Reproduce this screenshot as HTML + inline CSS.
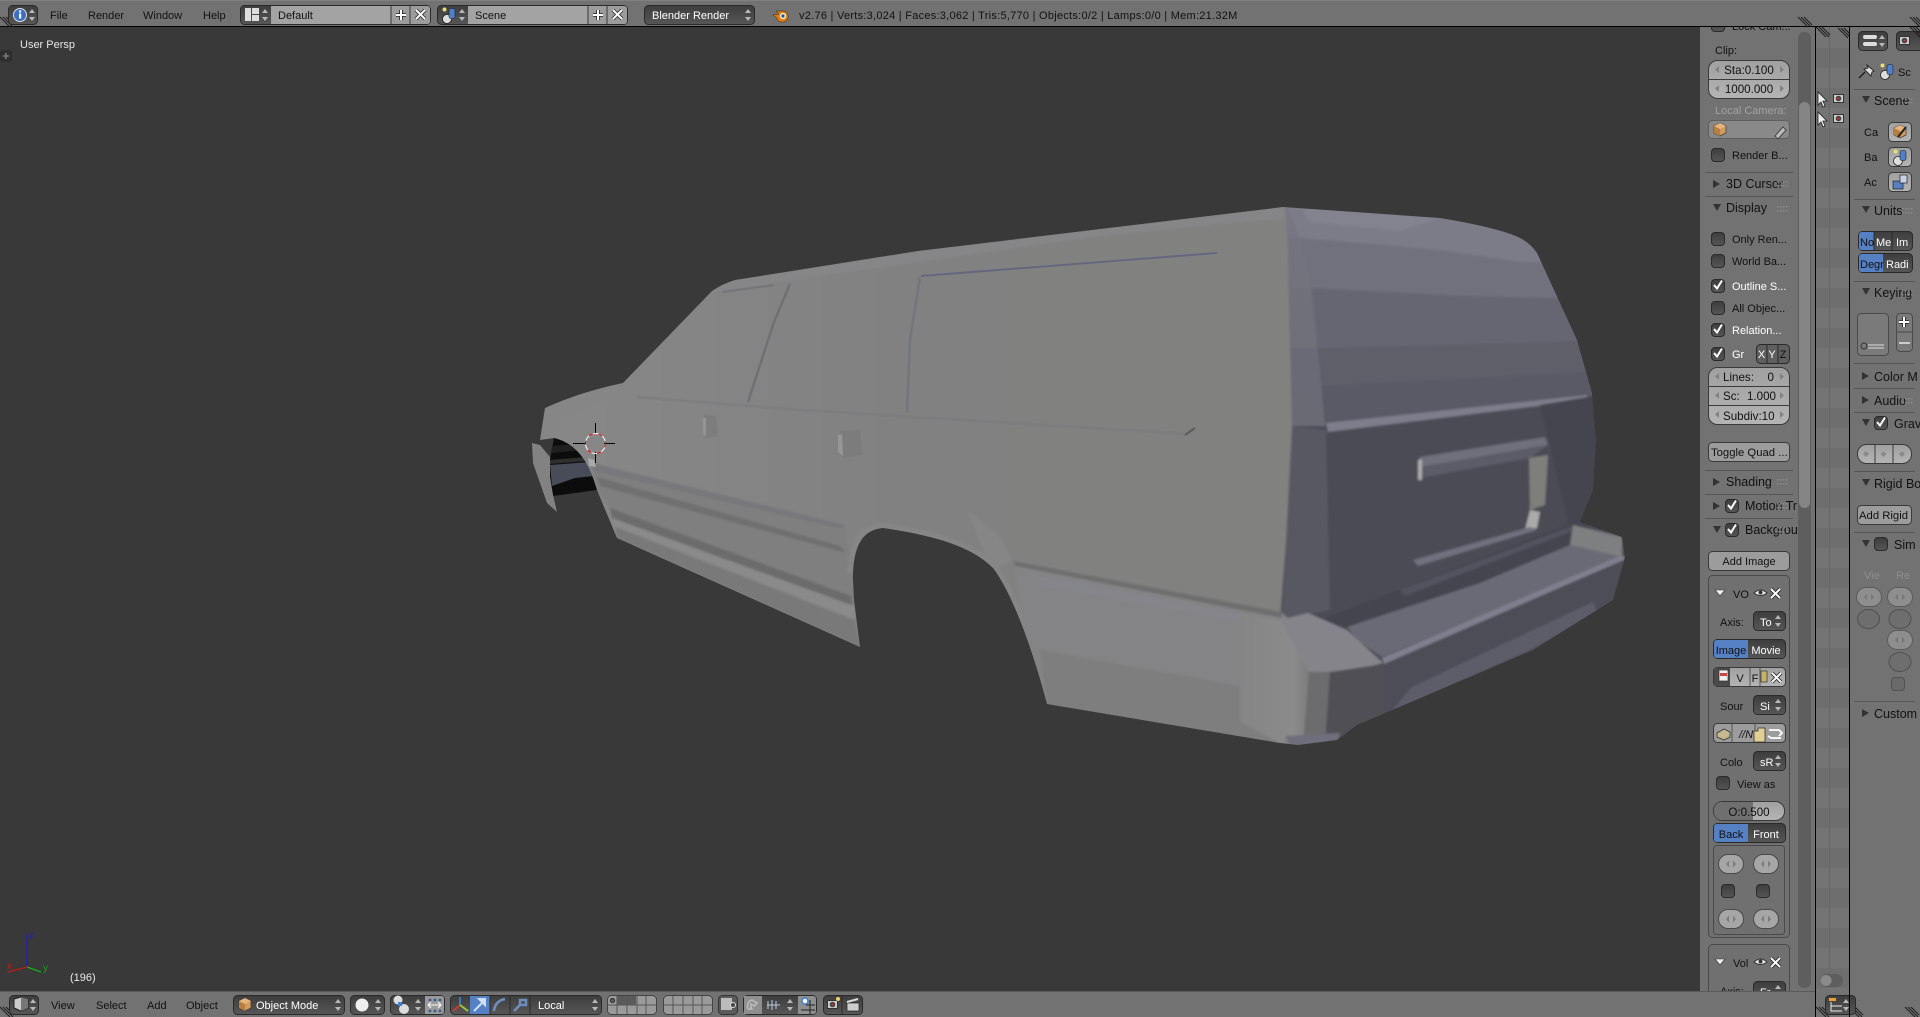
<!DOCTYPE html>
<html><head><meta charset="utf-8"><title>Blender</title>
<style>
html,body{margin:0;padding:0;background:#393939;overflow:hidden}
svg{display:block;position:absolute;left:0;top:0}
text{font-family:"Liberation Sans","DejaVu Sans",sans-serif;font-size:11px;fill:#111}
.w{fill:#fff}.v{fill:#e8e8e8}.g{fill:#a2a2a2}.h{font-size:12.5px}.f{font-size:11.6px}.c{text-anchor:middle}
.d{fill:url(#dk);stroke:#2a2a2a}.l{fill:url(#lt);stroke:#3a3a3a}.b{fill:#5680c4;stroke:#2a2a2a}
.s{stroke:#565656;stroke-width:1}.k{stroke:#000;stroke-width:1}
</style></head><body>
<svg width="1920" height="1017" viewBox="0 0 1920 1017" xmlns="http://www.w3.org/2000/svg">
<defs>
<linearGradient id="dk" x1="0" y1="0" x2="0" y2="1"><stop offset="0" stop-color="#3d3d3d"/><stop offset="1" stop-color="#565656"/></linearGradient>
<linearGradient id="lt" x1="0" y1="0" x2="0" y2="1"><stop offset="0" stop-color="#a0a0a0"/><stop offset="1" stop-color="#b4b4b4"/></linearGradient>
<linearGradient id="body" x1="540" y1="0" x2="1290" y2="0" gradientUnits="userSpaceOnUse"><stop offset="0" stop-color="#888888"/><stop offset=".5" stop-color="#818181"/><stop offset="1" stop-color="#818180"/></linearGradient>
<linearGradient id="qc" x1="1240" y1="0" x2="1312" y2="0" gradientUnits="userSpaceOnUse"><stop offset="0" stop-color="#858585"/><stop offset=".75" stop-color="#8b8b8b"/><stop offset="1" stop-color="#7a7a7a"/></linearGradient>
<filter id="soft" x="-5%" y="-5%" width="110%" height="110%"><feGaussianBlur stdDeviation="1"/></filter>
<clipPath id="car">
<path d="M540,440 L545,408 Q580,392 623,383 L712,291 Q722,284 735,280 L918,251 L1283,207 L1440,218 Q1500,228 1520,238 Q1530,243 1537,253 L1577,340 L1592,393 L1596,440 L1593,490 L1580,522 L1622,537 L1625,557 L1613,600 L1533,650 L1357,725 L1337,740 L1298,745 L1280,743 L1047,704 C1030,640 1010,590 993,568 C970,545 930,535 883,528 C860,530 853,550 853,580 L854,600 L860,647 L617,538 L597,490 Q585,445 554,438Z"/>
</clipPath>
<g id="ud"><polygon points="0,-2 3,-6 6,-2" fill="#b8b8b8"/><polygon points="0,2 3,6 6,2" fill="#b8b8b8"/></g>
<g id="dots" fill="#8c8c8c"><rect x="0" y="-3" width="1.5" height="1.5"/><rect x="3" y="-3" width="1.5" height="1.5"/><rect x="6" y="-3" width="1.5" height="1.5"/><rect x="9" y="-3" width="1.5" height="1.5"/><rect x="0" y="1" width="1.5" height="1.5"/><rect x="3" y="1" width="1.5" height="1.5"/><rect x="6" y="1" width="1.5" height="1.5"/><rect x="9" y="1" width="1.5" height="1.5"/></g>
<g id="cb"><rect x=".5" y=".5" width="13" height="13" rx="3.5" class="d"/></g>
<g id="cc"><rect x=".5" y=".5" width="13" height="13" rx="3.5" class="d"/><path d="M3,6 L6,9.5 L11,1.5" fill="none" stroke="#fff" stroke-width="2"/></g>
<polygon id="tr" points="0,-4 7,0 0,4" fill="#333"/>
<polygon id="td" points="-4,-4 4,-4 0,3" fill="#333"/>
<polygon id="tw" points="-5,-3 5,-3 0,3" fill="#eee" stroke="#333" stroke-width=".6"/>
<g id="eye"><path d="M0,0 Q6.5,-6 13,0 Q6.5,5 0,0Z" fill="#eee" stroke="#333"/><circle cx="6.5" cy="-.5" r="2" fill="#333"/></g>
<g id="x"><path d="M0,0 L9,9 M9,0 L0,9" stroke="#222" stroke-width="3.6"/><path d="M0,0 L9,9 M9,0 L0,9" stroke="#fff" stroke-width="2"/></g>
<g id="oval"><rect x=".5" y=".5" width="25" height="19" rx="9.5" fill="#a6a6a6" stroke="#4a4a4a"/><polygon points="8,10 11,6.5 11,13.5" fill="#7c7c7c"/><polygon points="18,10 15,6.5 15,13.5" fill="#7c7c7c"/></g>
<g id="cam"><rect x="0" y="2" width="11" height="9" fill="#333"/><rect x="1" y="3" width="9" height="7" fill="#ccc"/><circle cx="5.5" cy="6.5" r="2.8" fill="#444"/><circle cx="5.5" cy="6.5" r="1.1" fill="#c33"/></g>
<g id="plus"><path d="M-5,0H5M0,-5V5" stroke="#222" stroke-width="3.6"/><path d="M-5,0H5M0,-5V5" stroke="#fff" stroke-width="2"/></g>
<g id="cw" stroke="#1d1d1d" stroke-width="1"><path d="M0,0L10,10M3,0L13,10M6,0L14,8" fill="none"/></g>
<g id="cube"><polygon points="0,3 6,0 12,3 12,10 6,13 0,10" fill="#d49a5a" stroke="#3a3a3a" stroke-width=".7"/><polygon points="0,3 6,6 6,13 0,10" fill="#b77e42"/><polygon points="0,3 6,0 12,3 6,6" fill="#e8b47c"/></g>
<g id="scn"><circle cx="4" cy="12" r="4.5" fill="#ddd" stroke="#222" stroke-width=".8"/><rect x="6" y="1.5" width="6" height="10" rx="2" fill="#4f7fc9" stroke="#222" stroke-width=".6"/><circle cx="1.5" cy="2.5" r="2" fill="#e8e070"/></g>
</defs>

<rect width="1920" height="1017" fill="#393939"/>

<!-- wheel well (sits outside the body silhouette) -->
<polygon fill="#0c0c0c" points="554,438 570,441 583,457 590,470 597,490 553,496 550,477 550,460"/>
<polygon fill="#484c58" points="550,465 590,462 593,476 575,478 552,486"/>
<polygon fill="#2e2e2e" points="550,460 586,457 588,461 550,464"/>
<polygon fill="#202020" points="552,446 578,444 582,450 551,453"/>

<!-- car -->
<g clip-path="url(#car)">
<g filter="url(#soft)">
<rect x="520" y="190" width="790" height="560" fill="url(#body)"/>
<polygon fill="#868686" points="545,408 575,396 623,383 640,370 652,395 600,402 565,420 552,440 540,440"/>
<polygon fill="#868689" points="716,288 735,280 918,251 1283,207 1286,218 1100,236 920,262 790,280 722,291"/>
<!-- rocker strips -->
<polygon fill="#7f7f7f" points="592,463 845,527 853,573 854,600 610,510 597,490"/>
<polygon fill="#77777c" points="592,463 845,525 842,529 592,470"/>
<polygon fill="#707070" points="597,477 840,546 846,553 600,486"/>
<polygon fill="#6c6c6c" points="610,508 851,596 853,606 612,518"/>
<polygon fill="#8a8a8a" points="612,518 854,606 855,620 616,527"/>
<polygon fill="#797979" points="616,527 855,620 860,647 617,538"/>
<!-- arch brightening -->
<path d="M853,573 C853,545 860,530 883,528 C930,535 970,545 993,568 C1010,590 1030,640 1047,704" fill="none" stroke="#868686" stroke-width="10"/>
<polygon fill="#868686" points="967,510 997,533 1013,560 997,568 983,550"/>
<!-- rear -->
<polygon fill="#4b4b55" points="1287,205 1640,205 1640,760 1340,760 1322,647 1280,620 1290,490 1293,423"/>
<polygon fill="#5a5a66" points="1287,200 1630,200 1630,392 1325,426 1292,426"/>
<polygon fill="#5e5e6a" points="1287,200 1630,200 1630,370 1322,386 1292,386"/>
<polygon fill="#666672" points="1287,200 1630,200 1630,340 1480,344 1318,348 1291,348"/>
<polygon fill="#71717e" points="1285,200 1630,200 1630,300 1467,296 1310,288 1290,288"/>
<polygon fill="#7c7c89" points="1285,200 1630,200 1630,265 1520,262 1440,250 1300,238 1288,238"/>
<polygon fill="#83838f" points="1300,207 1440,218 1400,231 1310,222"/>
<polygon fill="#74747f" opacity=".6" points="1287,207 1300,238 1312,288 1325,426 1292,426"/>
<polygon fill="#7d7d8b" points="1326,423 1587,395 1587,400 1328,432"/>
<polygon fill="#44444f" points="1540,405 1600,395 1600,525 1570,530"/>
<polygon fill="#585862" points="1292,426 1326,430 1330,610 1282,620"/>
<polygon fill="#6f6f7d" points="1420,457 1545,437 1548,445 1420,467"/>
<polygon fill="#5b5b67" points="1420,467 1548,445 1530,458 1420,478"/>
<polygon fill="#7e7f7a" points="1529,458 1548,455 1545,505 1530,510"/>
<polygon fill="#aaa" points="1418,460 1422,459 1422,480 1418,480"/>
<polygon fill="#aaa" points="1530,510 1540,512 1537,528 1525,530"/>
<polygon fill="#70707e" points="1413,560 1530,527 1537,530 1418,566"/>
<polygon fill="#44444f" points="1320,620 1580,520 1575,548 1347,632"/>
<polygon fill="#53535f" points="1400,590 1575,525 1575,530 1405,596"/>
<polygon fill="#6a6a76" points="1347,627 1480,583 1570,545 1622,557 1382,657 1357,640"/>
<polygon fill="#7f7f8e" points="1382,658 1622,555 1626,559 1384,664"/>
<polygon fill="#4d4d59" points="1384,664 1630,559 1613,600 1533,650 1387,715 1357,728"/>
<polygon fill="#5d5d6a" points="1412,687 1593,602 1597,612 1530,650 1390,713"/>
<polygon fill="#7e7f80" points="1573,525 1622,537 1622,557 1570,545"/>
<!-- lower quarter (over rear base) -->
<polygon fill="#848486" points="1013,562 1282,613 1322,647 1308,732 1280,743 1047,704 1027,640"/>
<polygon fill="#6e6e6e" points="1013,561 1282,612 1282,618 1015,566"/>
<polygon fill="#85858c" points="1040,576 1240,614 1240,622 1040,586"/>
<polygon fill="#7e7e7e" points="1040,650 1308,698 1307,732 1280,743 1047,704"/>
<polygon fill="url(#qc)" points="1240,613 1280,620 1322,647 1310,673 1308,732 1280,743 1240,722"/>
<polygon fill="#84848a" points="1280,620 1308,613 1347,630 1383,663 1357,670 1310,673"/>
<polygon fill="#6c6c6e" points="1309,672 1332,672 1325,745 1303,745"/>
<polygon fill="#4f4f54" points="1330,672 1384,664 1385,722 1337,745 1325,745"/>
<polygon fill="#6e6e7c" points="1285,736 1340,733 1337,745 1290,746"/>
</g>
<!-- window lines -->
<path d="M907,413 L910,340 L920,277" fill="none" stroke="#74757f" stroke-width="2.6"/>
<path d="M921,276 L1217,253" fill="none" stroke="#64677f" stroke-width="2"/>
<path d="M748,402 L774,322 L790,284" fill="none" stroke="#6f6f76" stroke-width="2.4"/>
<path d="M722,292 L774,285" fill="none" stroke="#74747a" stroke-width="2"/>
<path d="M637,397 L800,410 L1190,434" fill="none" stroke="#7c7c81" stroke-width="3" opacity=".6"/>
<path d="M1185,435 L1195,428" fill="none" stroke="#5c5c5c" stroke-width="2"/>
<!-- handles -->
<polygon fill="#7d7d7d" points="704,414 716,416 718,436 705,438"/><polygon fill="#949494" points="703,418 706,418 706,436 703,434"/>
<polygon fill="#7c7c7c" points="840,431 860,430 862,455 842,458"/><polygon fill="#969696" points="838,435 842,434 843,456 838,452"/>
</g>
<polygon fill="#aaa" points="588,458 594,460 596,467 589,466"/>
<polygon fill="#828282" points="532,443 540,445 550,457 550,477 553,495 557,512 547,503 540,483 533,463"/>
<!-- 3D cursor -->
<path d="M573,443.5H586M604,443.5H615M595.5,423V434M595.5,452V463" stroke="#000" fill="none"/>
<circle cx="595.5" cy="443.5" r="10" fill="none" stroke="#fff" stroke-width="1"/>
<circle cx="595.5" cy="443.5" r="10" fill="none" stroke="#e00" stroke-width="1" stroke-dasharray="4 6"/>

<text x="20" y="48" class="v">User Persp</text>
<rect x="0" y="50" width="12" height="12" rx="2" fill="#2f2f2f"/><path d="M3,56H9M6,53V59" stroke="#777" stroke-width="1.6"/>
<text x="70" y="981" class="v">(196)</text>
<path d="M27,967L27,934" stroke="#1a1ad0" stroke-width="1.2"/><path d="M27,967L8,972" stroke="#c01818" stroke-width="1.2"/><path d="M27,967L41,972" stroke="#18b018" stroke-width="1.2"/>
<text x="29" y="938" style="fill:#1a1ad0;font-size:9px">z</text><text x="43" y="971" style="fill:#18a018;font-size:10px">y</text><text x="7" y="969" style="fill:#c01818;font-size:10px">x</text>

<!-- N panel -->
<rect x="1700" y="26" width="116" height="966" fill="#727272"/>
<use href="#cb" x="1711" y="18"/><text x="1732" y="30">Lock Cam...</text>
<text x="1715" y="54">Clip:</text>
<rect x="1708.5" y="60.5" width="81" height="38" rx="9" fill="url(#lt)" stroke="#3a3a3a"/><path d="M1708,79.5H1790" stroke="#3a3a3a"/>
<text x="1749" y="74" class="f c">Sta:0.100</text><text x="1749" y="93" class="f c">1000.000</text>
<path d="M1719,66l-4,3.5 4,3.5zM1780,66l4,3.5-4,3.5zM1719,85l-4,3.5 4,3.5zM1780,85l4,3.5-4,3.5z" fill="#828282"/>
<text x="1715" y="114" class="g">Local Camera:</text>
<rect x="1708.5" y="120.5" width="81" height="18" rx="4" fill="#898989" stroke="#5e5e5e"/><use href="#cube" x="1714" y="123"/>
<path d="M1775,136l8,-9 3,3 -8,9z" fill="#bbb" stroke="#333" stroke-width=".8"/>
<use href="#cb" x="1711" y="148"/><text x="1732" y="159">Render B...</text>
<path class="s" d="M1705,172.5H1793M1705,196.5H1793M1705,470.5H1793M1705,494.5H1793M1705,518.5H1793"/>
<use href="#tr" x="1713" y="184"/><text x="1726" y="188" class="h">3D Cursor</text><use href="#dots" x="1777" y="184"/>
<use href="#td" x="1717" y="208"/><text x="1726" y="212" class="h">Display</text><use href="#dots" x="1777" y="209"/>
<use href="#cb" x="1711" y="232"/><text x="1732" y="243">Only Ren...</text>
<use href="#cb" x="1711" y="254"/><text x="1732" y="265">World Ba...</text>
<use href="#cc" x="1711" y="279"/><text x="1732" y="290" class="w">Outline S...</text>
<use href="#cb" x="1711" y="301"/><text x="1732" y="312">All Objec...</text>
<use href="#cc" x="1711" y="323"/><text x="1732" y="334" class="w">Relation...</text>
<use href="#cc" x="1711" y="347"/><text x="1732" y="358" class="w">Gr</text>
<rect x="1756.5" y="344.5" width="33" height="19" rx="4" fill="#5f5f5f" stroke="#2a2a2a"/><path d="M1767,345V363M1778,345V363" stroke="#2a2a2a"/>
<text x="1761.5" y="358" class="c w">X</text><text x="1772" y="358" class="c w">Y</text><text x="1783" y="358" class="c">Z</text>
<rect x="1708.5" y="367.5" width="81" height="57" rx="9" fill="url(#lt)" stroke="#3a3a3a"/><path d="M1708,386.5H1790M1708,405.5H1790" stroke="#3a3a3a"/>
<path d="M1719,373l-4,3.5 4,3.5zM1780,373l4,3.5-4,3.5zM1719,392l-4,3.5 4,3.5zM1780,392l4,3.5-4,3.5zM1719,411l-4,3.5 4,3.5zM1780,411l4,3.5-4,3.5z" fill="#828282"/>
<text x="1723" y="381" class="f">Lines:</text><text x="1774" y="381" class="f" text-anchor="end">0</text>
<text x="1723" y="400" class="f">Sc:</text><text x="1776" y="400" class="f" text-anchor="end">1.000</text>
<text x="1723" y="420" class="f">Subdiv:10</text>
<rect x="1708.5" y="442.5" width="81" height="19" rx="4" fill="#9c9c9c" stroke="#3a3a3a"/><text x="1711" y="456" style="font-size:11.3px">Toggle Quad ...</text>
<use href="#tr" x="1713" y="482"/><text x="1726" y="486" class="h">Shading</text><use href="#dots" x="1777" y="482"/>
<use href="#tr" x="1713" y="506"/><use href="#cc" x="1725" y="499"/><text x="1745" y="510" class="h">Motion Tr</text><use href="#dots" x="1777" y="506"/>
<use href="#td" x="1717" y="530"/><use href="#cc" x="1725" y="523"/><text x="1745" y="534" class="h">Backgrou</text><use href="#dots" x="1777" y="530"/>
<rect x="1708.5" y="551.5" width="81" height="19" rx="4" fill="#9c9c9c" stroke="#3a3a3a"/><text x="1749" y="565" class="c">Add Image</text>
<rect x="1708.5" y="575.5" width="81" height="362" rx="4" fill="#707070" stroke="#4a4a4a"/>
<use href="#tw" x="1720" y="593"/><text x="1733" y="598">VO</text><use href="#eye" x="1754" y="593"/><use href="#x" x="1771" y="589"/>
<text x="1720" y="626">Axis:</text><rect x="1753.5" y="611.5" width="32" height="19" rx="4" class="d"/><text x="1760" y="626" class="w">To</text><use href="#ud" x="1775" y="621"/>
<rect x="1713.5" y="639.5" width="72" height="19" rx="4" class="d"/><path d="M1748,640H1717Q1714,640 1714,643V655Q1714,658 1717,658H1748Z" fill="#5680c4"/><text x="1731" y="654" class="c">Image</text><text x="1766" y="654" class="c w">Movie</text>
<rect x="1713.5" y="667.5" width="72" height="19" rx="4" fill="url(#lt)" stroke="#3a3a3a"/><path d="M1714,668H1730V686H1714Z" fill="#4a4a4a"/>
<rect x="1719" y="670" width="9" height="11" fill="#eee" stroke="#333" stroke-width=".7"/><rect x="1720" y="673" width="7" height="3" fill="#c44"/>
<text x="1740" y="682" class="c">V</text><text x="1755" y="682" class="c">F</text><path d="M1750,668V686M1760,668V686" stroke="#555"/><rect x="1761" y="671" width="6" height="11" fill="#c8b26a" stroke="#333" stroke-width=".7"/><use href="#x" x="1772" y="673"/>
<text x="1720" y="710">Sour</text><rect x="1753.5" y="695.5" width="32" height="19" rx="4" class="d"/><text x="1760" y="710" class="w">Si</text><use href="#ud" x="1775" y="705"/>
<rect x="1713.5" y="723.5" width="72" height="19" rx="4" fill="#9c9c9c" stroke="#3a3a3a"/><path d="M1732,724V742M1755,724V742" stroke="#555"/>
<path d="M1717,733l7,-4 6,3v5l-6,3 -7,-3z" fill="#c6b98f" stroke="#333" stroke-width=".8"/>
<text x="1739" y="738" style="font-style:italic">//N</text>
<path d="M1754,731h4v-3h7v14h-11z" fill="#e2cf94" stroke="#333" stroke-width=".8"/>
<path d="M1769,730h10l3,3-3,3M1781,738h-10l-3,-2" fill="none" stroke="#fff" stroke-width="1.8"/>
<text x="1720" y="766">Colo</text><rect x="1753.5" y="751.5" width="32" height="19" rx="4" class="d"/><text x="1760" y="766" class="w">sR</text><use href="#ud" x="1775" y="761"/>
<use href="#cb" x="1716" y="776"/><text x="1737" y="788">View as</text>
<rect x="1713.5" y="801.5" width="71" height="19" rx="9" fill="url(#lt)" stroke="#3a3a3a"/><path d="M1753,802H1723Q1714,802 1714,811Q1714,820 1723,820H1753Z" fill="#6f6f6f"/><text x="1749" y="816" class="c f">O:0.500</text>
<rect x="1713.5" y="823.5" width="72" height="19" rx="4" class="d"/><path d="M1748,824H1717Q1714,824 1714,827V839Q1714,842 1717,842H1748Z" fill="#5680c4"/><text x="1731" y="838" class="c">Back</text><text x="1766" y="838" class="c w">Front</text>
<rect x="1713.5" y="845.5" width="71" height="89" rx="3" fill="none" stroke="#4a4a4a"/>
<use href="#oval" x="1718" y="854"/><use href="#oval" x="1753" y="854"/><use href="#cb" x="1721" y="884"/><use href="#cb" x="1756" y="884"/><use href="#oval" x="1718" y="909"/><use href="#oval" x="1753" y="909"/>
<rect x="1708.5" y="944.5" width="81" height="60" rx="4" fill="#707070" stroke="#4a4a4a"/>
<use href="#tw" x="1720" y="962"/><text x="1733" y="967">Vol</text><use href="#eye" x="1754" y="962"/><use href="#x" x="1771" y="958"/>
<text x="1720" y="995">Axis:</text><rect x="1753.5" y="981.5" width="32" height="19" rx="4" class="d"/><text x="1760" y="996" class="w">Fr</text><use href="#ud" x="1775" y="991"/>
<rect x="1798" y="32" width="13" height="956" rx="6" fill="#5e5e5e"/>
<rect x="1799" y="102" width="11" height="406" rx="5.5" fill="#858585"/>

<!-- outliner -->
<rect x="1816" y="26" width="33" height="966" fill="#747474"/>
<g fill="#6e6e6e"><rect x="1816" y="48" width="33" height="20"/><rect x="1816" y="88" width="33" height="20"/><rect x="1816" y="128" width="33" height="20"/><rect x="1816" y="168" width="33" height="20"/><rect x="1816" y="208" width="33" height="20"/><rect x="1816" y="248" width="33" height="20"/><rect x="1816" y="288" width="33" height="20"/><rect x="1816" y="328" width="33" height="20"/><rect x="1816" y="368" width="33" height="20"/><rect x="1816" y="408" width="33" height="20"/><rect x="1816" y="448" width="33" height="20"/><rect x="1816" y="488" width="33" height="20"/><rect x="1816" y="528" width="33" height="20"/><rect x="1816" y="568" width="33" height="20"/><rect x="1816" y="608" width="33" height="20"/><rect x="1816" y="648" width="33" height="20"/><rect x="1816" y="688" width="33" height="20"/><rect x="1816" y="728" width="33" height="20"/><rect x="1816" y="768" width="33" height="20"/><rect x="1816" y="808" width="33" height="20"/><rect x="1816" y="848" width="33" height="20"/><rect x="1816" y="888" width="33" height="20"/><rect x="1816" y="928" width="33" height="20"/><rect x="1816" y="968" width="33" height="20"/></g>
<path d="M1829.5,26V975" stroke="#666"/>
<path d="M1818,92l0,13 3,-3 2,5 2,-1 -2,-5 4,0z M1818,112l0,13 3,-3 2,5 2,-1 -2,-5 4,0z" fill="#eee" stroke="#222" stroke-width=".8"/>
<use href="#cam" x="1833" y="92"/><use href="#cam" x="1833" y="112"/>
<rect x="1820" y="974" width="23" height="13" rx="6.5" fill="#5e5e5e"/><circle cx="1826" cy="980.5" r="5.5" fill="#8a8a8a"/>
<use href="#cw" x="1816" y="27"/><use href="#cw" x="1838" y="28"/>

<!-- properties -->
<rect x="1850" y="26" width="70" height="991" fill="#727272"/>
<rect x="1858.5" y="31.5" width="29" height="19" rx="4" class="d"/><rect x="1863" y="35" width="14" height="4" rx="2" fill="#ddd"/><rect x="1863" y="42" width="14" height="4" rx="2" fill="#ddd"/><use href="#ud" x="1879" y="41"/>
<rect x="1896.5" y="31.5" width="28" height="19" rx="4" class="d"/><use href="#cam" x="1899" y="34"/>
<use href="#cw" x="1910" y="27"/>
<path d="M1859,78l6,-6" stroke="#222" stroke-width="1.5"/><path d="M1867,65l7,6 -2,1 -1,4 -7,-7 4,-1z" fill="#ddd" stroke="#222" stroke-width=".9"/>
<use href="#scn" x="1881" y="63"/><text x="1898" y="76">Sc</text>
<path class="s" d="M1854,89.5H1915M1854,199.5H1915M1854,281.5H1915M1854,363.5H1915M1854,388.5H1915M1854,412.5H1915M1854,471.5H1915M1854,532.5H1915M1854,701.5H1915"/>
<use href="#td" x="1866" y="100"/><text x="1874" y="105" class="h">Scene</text><use href="#dots" x="1902" y="101"/>
<text x="1864" y="136">Ca</text><rect x="1888.5" y="122.5" width="23" height="19" rx="4" fill="url(#lt)" stroke="#3a3a3a"/><use href="#cube" x="1894" y="125"/><path d="M1898,137l8,-10" stroke="#222" stroke-width="2"/>
<text x="1864" y="161">Ba</text><rect x="1888.5" y="147.5" width="23" height="19" rx="4" fill="url(#lt)" stroke="#3a3a3a"/><use href="#scn" x="1894" y="149"/>
<text x="1864" y="186">Ac</text><rect x="1888.5" y="172.5" width="23" height="19" rx="4" fill="url(#lt)" stroke="#3a3a3a"/><rect x="1893" y="181" width="10" height="8" fill="#5680c4" stroke="#222" stroke-width=".7"/><rect x="1900" y="175" width="7" height="8" fill="#c7d2e8" stroke="#222" stroke-width=".7"/>
<use href="#td" x="1866" y="210"/><text x="1874" y="215" class="h">Units</text><use href="#dots" x="1902" y="211"/>
<rect x="1858.5" y="231.5" width="54" height="19" rx="4" class="d"/><path d="M1874,232H1862Q1859,232 1859,235V247Q1859,250 1862,250H1874Z" fill="#5680c4"/><path d="M1874,232V250M1892,232V250" stroke="#2a2a2a"/>
<text x="1860" y="246">No</text><text x="1876" y="246" class="w">Me</text><text x="1896" y="246" class="w">Im</text>
<rect x="1858.5" y="253.5" width="54" height="19" rx="4" class="d"/><path d="M1883,254H1862Q1859,254 1859,257V269Q1859,272 1862,272H1883Z" fill="#5680c4"/>
<svg x="1859" y="254" width="24" height="18"><text x="1" y="14">Degr</text></svg><text x="1886" y="268" class="w">Radi</text>
<use href="#td" x="1866" y="292"/><text x="1874" y="297" class="h">Keying</text><use href="#dots" x="1902" y="293"/>
<rect x="1857.5" y="313.5" width="31" height="42" rx="4" fill="#7a7a7a" stroke="#4a4a4a"/><circle cx="1864" cy="346" r="3" fill="none" stroke="#333"/><path d="M1868,345H1884M1868,348H1884" stroke="#ddd"/>
<rect x="1896.5" y="313.5" width="16" height="38" rx="4" fill="#7a7a7a" stroke="#4a4a4a"/><path d="M1897,332H1912" stroke="#4a4a4a"/><use href="#plus" x="1904" y="322"/><rect x="1899" y="342" width="11" height="2" fill="#ccc"/>
<use href="#tr" x="1862" y="376"/><text x="1874" y="381" class="h">Color M</text>
<use href="#tr" x="1862" y="400"/><text x="1874" y="405" class="h">Audio</text><use href="#dots" x="1902" y="401"/>
<use href="#td" x="1866" y="423"/><use href="#cc" x="1874" y="416"/><text x="1894" y="428" class="h">Gravity</text>
<rect x="1857.5" y="444.5" width="54" height="19" rx="9" fill="url(#lt)" stroke="#3a3a3a"/><path d="M1875,445V463M1893,445V463" stroke="#3a3a3a"/><g fill="#8a8a8a"><path d="M1866,451l3,3-3,3-3,-3zM1883.5,451l3,3-3,3-3,-3zM1902,451l3,3-3,3-3,-3z"/></g>
<use href="#td" x="1866" y="483"/><text x="1874" y="488" class="h">Rigid Bo</text>
<rect x="1857.5" y="505.5" width="54" height="19" rx="4" fill="#9c9c9c" stroke="#3a3a3a"/><text x="1859" y="519" style="font-size:11.3px">Add Rigid</text>
<use href="#td" x="1866" y="544"/><use href="#cb" x="1874" y="537"/><text x="1894" y="549" class="h">Sim</text>
<text x="1864" y="579" style="fill:#8e8e8e">Vie</text><text x="1896" y="579" style="fill:#8e8e8e">Re</text>
<use href="#oval" x="1856" y="587" opacity=".55"/><use href="#oval" x="1887" y="587" opacity=".55"/>
<ellipse cx="1868.5" cy="619" rx="11" ry="9.5" fill="#6e6e6e" stroke="#505050"/><ellipse cx="1900" cy="619" rx="11" ry="9.5" fill="#6e6e6e" stroke="#505050"/>
<use href="#oval" x="1887" y="630" opacity=".55"/><ellipse cx="1900" cy="662" rx="11" ry="9.5" fill="#6e6e6e" stroke="#505050"/>
<rect x="1891.5" y="677.5" width="13" height="13" rx="3.5" fill="#6a6a6a" stroke="#505050"/>
<use href="#tr" x="1862" y="713"/><text x="1874" y="718" class="h">Custom</text>

<path d="M1815.5,26V1017M1849.5,26V1017" class="k"/>

<!-- bottom header -->
<rect x="0" y="991" width="1815" height="26" fill="#727272"/><path d="M0,991.5H1815" stroke="#5a5a5a"/>
<rect x="1816" y="992" width="33" height="25" fill="#727272"/>
<use href="#cw" x="0" y="1007"/><use href="#cw" x="1816" y="1007"/><use href="#cw" x="1849" y="1007"/><use href="#cw" x="1905" y="1007"/>
<rect x="1825.5" y="995.5" width="30" height="19" rx="4" class="d"/><rect x="1829" y="998" width="7" height="3" fill="#f0a030"/><path d="M1831,1002V1011H1842M1831,1006H1842" stroke="#eee" fill="none"/><use href="#ud" x="1843" y="1005"/>
<path d="M1849.5,992V1017" class="k"/>
<rect x="9.5" y="995.5" width="29" height="19" rx="4" class="d"/><path d="M14,999l7,-2 7,2v9l-7,3 -7,-3z" fill="#ccc" stroke="#222"/><path d="M21,997v14l7,-3v-9z" fill="#777"/><use href="#ud" x="30" y="1005"/>
<text x="51" y="1009">View</text><text x="96" y="1009">Select</text><text x="147" y="1009">Add</text><text x="186" y="1009">Object</text>
<rect x="233.5" y="995.5" width="111" height="19" rx="4" class="d"/><use href="#cube" x="239" y="998"/><text x="256" y="1009" class="w">Object Mode</text><use href="#ud" x="335" y="1005"/>
<rect x="350.5" y="995.5" width="34" height="19" rx="4" class="d"/><circle cx="362" cy="1005" r="6.5" fill="#eee"/><use href="#ud" x="375" y="1005"/>
<rect x="390.5" y="995.5" width="54" height="19" rx="4" class="d"/><path d="M425,996H441Q444,996 444,999V1011Q444,1014 441,1014H425Z" fill="#9a9a9a"/>
<circle cx="398" cy="1000" r="4.5" fill="#ddd"/><circle cx="404" cy="1009" r="5" fill="#ddd"/><rect x="398" y="1002" width="4" height="4" fill="#3a7fd8"/><use href="#ud" x="415" y="1005"/>
<path d="M428,1005H441M428,1005l3,-3M428,1005l3,3M441,1005l-3,-3M441,1005l-3,3" stroke="#fff" fill="none"/><g fill="#3a5a90"><circle cx="430" cy="1000" r="1.4"/><circle cx="435" cy="1000" r="1.4"/><circle cx="440" cy="1000" r="1.4"/><circle cx="430" cy="1011" r="1.4"/><circle cx="435" cy="1011" r="1.4"/><circle cx="440" cy="1011" r="1.4"/></g>
<rect x="450.5" y="995.5" width="151" height="19" rx="4" class="d"/><rect x="470" y="996" width="20" height="18" fill="#5680c4"/><path d="M490,996V1014M510,996V1014M530,996V1014" stroke="#2a2a2a"/>
<path d="M460,1005V997" stroke="#3a7fd8" stroke-width="1.8"/><path d="M460,1005L453,1011" stroke="#d33" stroke-width="1.8"/><path d="M460,1005L468,1011" stroke="#9c3" stroke-width="1.8"/>
<path d="M474,1011l9,-9M479,999h6v6z" stroke="#cfe0f5" stroke-width="2" fill="#cfe0f5"/>
<path d="M494,1011Q495,1001 505,999" stroke="#6d8fbf" stroke-width="2.5" fill="none"/>
<path d="M514,1011l6,-6v-5h6v5h-5" stroke="#6d8fbf" stroke-width="2.5" fill="none"/>
<text x="538" y="1009" class="w">Local</text><use href="#ud" x="592" y="1005"/>
<rect x="607.5" y="995.5" width="49" height="19" rx="4" fill="#9a9a9a" stroke="#444"/><rect x="617" y="996" width="19" height="9" fill="#5a5a5a"/><path d="M608,1005H656M617,996V1014M627,996V1014M637,996V1014M646,996V1014" stroke="#555"/><circle cx="612.5" cy="1000.5" r="2" fill="#666" stroke="#222"/>
<rect x="663.5" y="995.5" width="49" height="19" rx="4" fill="#9a9a9a" stroke="#444"/><path d="M664,1005H712M673,996V1014M683,996V1014M693,996V1014M702,996V1014" stroke="#555"/>
<rect x="718.5" y="995.5" width="19" height="19" rx="4" fill="#5a5a5a" stroke="#333"/><rect x="721" y="998" width="11" height="12" fill="#bbb"/><circle cx="733" cy="1005" r="2.5" fill="#444" stroke="#ddd"/>
<rect x="743.5" y="995.5" width="73" height="19" rx="4" class="d"/><path d="M744,996H762V1014H744ZM798,996H813Q816,996 816,999V1011Q816,1014 813,1014H798Z" fill="#8f8f8f"/>
<path d="M748,1009q-2,-7 4,-9l5,3 -3,3 -3,-2q-1,2 1,5z" fill="none" stroke="#bbb" stroke-width="1.6"/>
<path d="M767,1005H780M768,1001V1009M772,1000V1010M776,1001V1009" stroke="#bcd" fill="none"/><use href="#ud" x="787" y="1005"/>
<circle cx="805" cy="1001" r="3" fill="#fff" stroke="#3a7fd8" stroke-width="1.5"/><path d="M801,1010H815M806,1005H815M810,1000V1014" stroke="#222"/>
<rect x="823.5" y="995.5" width="39" height="19" rx="4" class="d"/><path d="M842,996V1014" stroke="#2a2a2a"/><use href="#cam" x="827" y="998"/><circle cx="838" cy="999" r="2" fill="#f0d060"/>
<rect x="847" y="1003" width="12" height="8" fill="#ccc" stroke="#222" stroke-width=".7"/><path d="M847,1002l11,-3" stroke="#ddd" stroke-width="2"/>

<!-- top header -->
<rect x="0" y="0" width="1920" height="26" fill="#727272"/><path d="M0,0.5H1920" stroke="#808080"/>
<path d="M0,26.5H1920" class="k"/>
<use href="#cw" x="0" y="17"/><use href="#cw" x="1798" y="17"/><use href="#cw" x="1910" y="17"/>
<rect x="8.5" y="5.5" width="29" height="19" rx="4" class="d"/><circle cx="20" cy="15" r="6.5" fill="#3b6fc0" stroke="#ddd"/><rect x="19" y="13.5" width="2.2" height="5" fill="#fff"/><rect x="19" y="10.5" width="2.2" height="2" fill="#fff"/><use href="#ud" x="29" y="15"/>
<text x="50" y="19">File</text><text x="88" y="19">Render</text><text x="143" y="19">Window</text><text x="203" y="19">Help</text>
<rect x="240.5" y="5.5" width="190" height="19" rx="4" class="d"/><rect x="271" y="6" width="120" height="18" fill="#a3a3a3"/><path d="M391,6H427Q430,6 430,9V21Q430,24 427,24H391Z" fill="#9c9c9c"/><path d="M391,6V24M410,6V24" stroke="#3a3a3a"/>
<rect x="245" y="8" width="6" height="13" fill="#ddd"/><rect x="252" y="8" width="7" height="6" fill="#ddd"/><rect x="252" y="15" width="7" height="6" fill="#ddd"/><use href="#ud" x="262" y="15"/>
<text x="278" y="19">Default</text><use href="#plus" x="401" y="15"/><use href="#x" x="416" y="10"/>
<rect x="437.5" y="5.5" width="190" height="19" rx="4" class="d"/><rect x="468" y="6" width="120" height="18" fill="#a3a3a3"/><path d="M588,6H624Q627,6 627,9V21Q627,24 624,24H588Z" fill="#9c9c9c"/><path d="M588,6V24M607,6V24" stroke="#3a3a3a"/>
<use href="#scn" x="443" y="7"/><use href="#ud" x="459" y="15"/>
<text x="475" y="19">Scene</text><use href="#plus" x="598" y="15"/><use href="#x" x="613" y="10"/>
<rect x="644.5" y="5.5" width="110" height="19" rx="4" class="d"/><text x="652" y="19" class="w">Blender Render</text><use href="#ud" x="745" y="15"/>
<path d="M773,15l6,-1 -3,-3 8,0q5,2 4,7 -2,5 -7,4 -4,-1 -4,-4z" fill="#e87d0d" stroke="#222" stroke-width=".5"/><circle cx="783" cy="16" r="3" fill="#fff"/><circle cx="783" cy="16" r="1.7" fill="#265787"/>
<text x="799" y="19" style="letter-spacing:.26px">v2.76 | Verts:3,024 | Faces:3,062 | Tris:5,770 | Objects:0/2 | Lamps:0/0 | Mem:21.32M</text>
</svg>
</body></html>
